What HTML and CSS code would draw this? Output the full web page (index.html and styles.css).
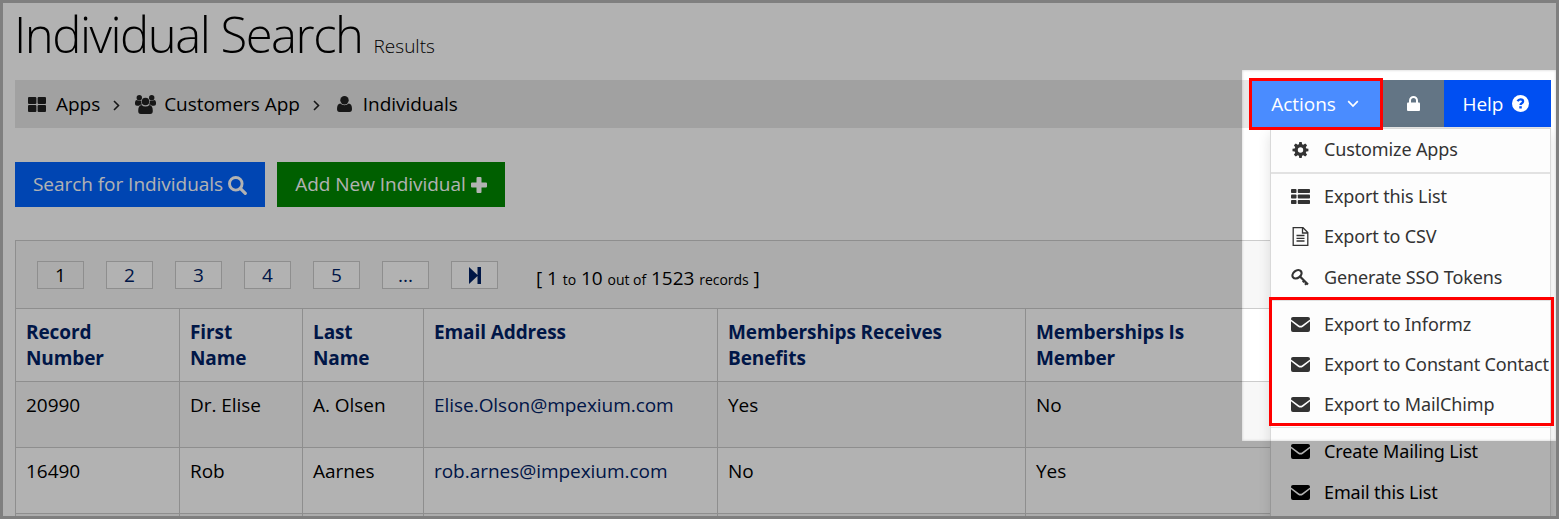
FILE: index.html
```html
<!DOCTYPE html>
<html lang="en">
<head>
    <meta charset="UTF-8">
    <meta name="viewport" content="width=device-width, initial-scale=1.0">
    <title>Individual Search</title>
    <link rel="stylesheet" href="styles.css">
</head>
<body>
    <svg class="sprite" aria-hidden="true">
        <symbol id="mail" viewBox="0 0 19 15">
            <path d="M2 0h15a2 2 0 0 1 2 2v.6L11.200 8.200q-1.700 1.200-3.400 0L0 2.600V2a2 2 0 0 1 2-2z"/>
            <path d="M0 4.300l7 5.400q2.500 1.800 5 0l7-5.400V13a2 2 0 0 1-2 2H2a2 2 0 0 1-2-2z"/>
        </symbol>
    </svg>
    <div class="page">
        <h1>Individual Search <small>Results</small></h1>

        <div class="toolbar">
            <nav class="breadcrumb">
                <svg class="icon-apps" width="18" height="15" viewBox="0 0 18 15"><rect width="8.400" height="6.900" rx="1"/><rect x="9.600" width="8.400" height="6.900" rx="1"/><rect y="8.100" width="8.400" height="6.900" rx="1"/><rect x="9.600" y="8.100" width="8.400" height="6.900" rx="1"/></svg>
                <a href="#">Apps</a>
                <svg class="sep" width="7" height="11" viewBox="0 0 7 11"><path d="M1 1l4.500 4.500L1 10"/></svg>
                <svg class="icon-group" width="21" height="19" viewBox="0 0 21 19"><circle cx="4.300" cy="2.700" r="2.700"/><circle cx="16.700" cy="2.700" r="2.700"/><path d="M0 9V7.500Q0 5 1.800 5q1 .8 2.500.8.900 0 1.800-.4-.2 2.600 1 4.200-1.900 0-3.100 1.200H2Q0 10.800 0 9zM21 9V7.500Q21 5 19.200 5q-1 .8-2.500.8-.9 0-1.800-.4.2 2.600-1 4.200 1.900 0 3.100 1.200h2Q21 10.800 21 9z"/><circle cx="10.500" cy="6.500" r="3.800"/><path d="M6.500 10q1.700 1.500 4 1.500t4-1.500q3.300.4 3.300 6 0 3-2.600 3H5.800q-2.600 0-2.600-3 0-5.600 3.300-6z"/></svg>
                <a href="#">Customers App</a>
                <svg class="sep" width="7" height="11" viewBox="0 0 7 11"><path d="M1 1l4.500 4.500L1 10"/></svg>
                <svg class="icon-user" width="15" height="16" viewBox="0 0 15 16"><circle cx="7.500" cy="4.200" r="4.200"/><path d="M3.300 7.500Q5 9.200 7.500 9.200t4.200-1.700Q15 7.800 15 13q0 3-2.500 3h-10Q0 16 0 13q0-5.200 3.300-5.500z"/></svg>
                <a href="#">Individuals</a>
            </nav>
            <div class="tools">
                <button class="tool tool-actions">Actions
                    <svg width="12" height="8" viewBox="0 0 12 8"><path d="M1.200 1.200L6 6l4.800-4.800" fill="none" stroke="#fff" stroke-width="1.700"/></svg>
                </button>
                <button class="tool tool-lock" aria-label="Lock">
                    <svg width="13" height="15" viewBox="0 0 13 15"><path d="M3 7V4.500a3.500 3.500 0 0 1 7 0V7" fill="none" stroke="#fff" stroke-width="2"/><rect y="6.500" width="13" height="8.500" rx="1"/></svg>
                </button>
                <button class="tool tool-help">Help
                    <svg width="17" height="17" viewBox="0 0 17 17"><circle cx="8.500" cy="8.500" r="8.500"/><path d="M5.600 6.300q.8-2 2.900-2 2.600 0 2.600 2 0 1.200-1.300 1.900-1.300.7-1.300 1.900" fill="none" stroke="#004ff2" stroke-width="2.300"/><rect x="7.300" y="11.200" width="2.500" height="2.300" fill="#004ff2"/></svg>
                </button>
            </div>

            <ul class="menu">
                <li><svg width="16" height="16" viewBox="0 0 16 16"><path fill-rule="evenodd" d="M6.800 0h2.400l.4 2.200 1.200.5 1.900-1.300 1.900 1.900-1.300 1.900.5 1.200 2.100.4v2.400l-2.100.4-.5 1.200 1.300 1.900-1.900 1.900-1.900-1.300-1.200.5L9.200 16H6.800l-.4-2.200-1.200-.5-1.900 1.300-1.900-1.900 1.300-1.900-.5-1.200L0 9.200V6.800l2.200-.4.500-1.200-1.300-1.900 1.900-1.900 1.900 1.300 1.200-.5zM8 5.300a2.700 2.700 0 1 0 0 5.400 2.700 2.700 0 0 0 0-5.400z"/></svg>Customize Apps</li>
                <li class="divider thick"></li>
                <li><svg width="19" height="15" viewBox="0 0 19 15"><rect width="5.500" height="4" rx=".8"/><rect x="6.800" width="12.200" height="4" rx=".8"/><rect y="5.500" width="5.500" height="4" rx=".8"/><rect x="6.800" y="5.500" width="12.200" height="4" rx=".8"/><rect y="11" width="5.500" height="4" rx=".8"/><rect x="6.800" y="11" width="12.200" height="4" rx=".8"/></svg>Export this List</li>
                <li><svg class="icon-file" width="16" height="19" viewBox="0 0 16 19"><path d="M.7.700h9.800l4.800 4.800v12.800H.7zM10 .7v5.300h5.300M4 8.500h8M4 11.300h8M4 14h8"/></svg>Export to CSV</li>
                <li><svg class="icon-key" width="19" height="17" viewBox="0 0 19 17"><path d="M8.500 7l8.500 8.500M14 15.800l2.300-2.500M11.800 13.200l2-2.200"/><ellipse cx="6" cy="5.300" rx="5" ry="3.600" transform="rotate(-38 6 5.300)"/></svg>Generate SSO Tokens</li>
                <li class="divider"></li>
                <li><svg width="19" height="15"><use href="#mail"/></svg>Export to Informz</li>
                <li><svg width="19" height="15"><use href="#mail"/></svg>Export to Constant Contact</li>
                <li><svg width="19" height="15"><use href="#mail"/></svg>Export to MailChimp</li>
                <li class="divider"></li>
                <li class="dark"><svg width="19" height="15"><use href="#mail"/></svg>Create Mailing List</li>
                <li class="dark"><svg width="19" height="15"><use href="#mail"/></svg>Email this List</li>
            </ul>
        </div>

        <div class="buttons">
            <button class="btn btn-search"><span>Search for Individuals</span>
                <svg width="19" height="19" viewBox="0 0 19 19"><circle cx="7.800" cy="7.800" r="6.300" fill="none" stroke="#fff" stroke-width="2.900"/><path d="M12.300 12.300l5 5" stroke="#fff" stroke-width="3.200" stroke-linecap="round"/></svg>
            </button>
            <button class="btn btn-add"><span>Add New Individual</span>
                <svg width="16" height="16" viewBox="0 0 16 16"><path d="M5.500 1q0-1 1-1h3q1 0 1 1v4.500H15q1 0 1 1v3q0 1-1 1h-4.500V15q0 1-1 1h-3q-1 0-1-1v-4.500H1q-1 0-1-1v-3q0-1 1-1h4.500z"/></svg>
            </button>
        </div>

        <div class="results">
            <div class="pager">
                <a class="current">1</a>
                <a>2</a>
                <a>3</a>
                <a>4</a>
                <a>5</a>
                <a>...</a>
                <a><svg width="12" height="17" viewBox="0 0 12 17"><path d="M0 0l8.500 8V0H12v17H8.500V9L0 17z"/></svg></a>
                <div class="count">[ 1 <small>to</small> 10 <small>out of</small> 1523 <small>records</small> ]</div>
            </div>
            <table>
                <colgroup>
                    <col class="c-record"><col class="c-first"><col class="c-last"><col class="c-email"><col class="c-benefits"><col>
                </colgroup>
                <thead>
                    <tr>
                        <th>Record<br>Number</th>
                        <th>First<br>Name</th>
                        <th>Last<br>Name</th>
                        <th>Email Address</th>
                        <th>Memberships Receives<br>Benefits</th>
                        <th>Memberships Is<br>Member</th>
                    </tr>
                </thead>
                <tbody>
                    <tr>
                        <td>20990</td>
                        <td>Dr. Elise</td>
                        <td>A. Olsen</td>
                        <td><a href="#">Elise.Olson@mpexium.com</a></td>
                        <td>Yes</td>
                        <td>No</td>
                    </tr>
                    <tr>
                        <td>16490</td>
                        <td>Rob</td>
                        <td>Aarnes</td>
                        <td><a href="#">rob.arnes@impexium.com</a></td>
                        <td>No</td>
                        <td>Yes</td>
                    </tr>
                    <tr><td></td><td></td><td></td><td></td><td></td><td></td></tr>
                </tbody>
            </table>
        </div>

        <!-- dims everything outside of the actions menu -->
        <div class="spotlight"></div>
        <div class="mark mark-actions"></div>
        <div class="mark mark-exports"></div>
    </div>
</body>
</html>
```
FILE: styles.css
```css
* {
    box-sizing: border-box;
}
body {
    margin: 0;
    font-family: "Open Sans", "Segoe UI", sans-serif;
    font-size: 19px;
    letter-spacing: -0.04px;
    color: #000;
}
a {
    color: #002266;
    text-decoration: none;
}
button {
    border: none;
    padding: 0;
    font: inherit;
    letter-spacing: inherit;
    color: #fff;
}
svg {
    flex: none;
}
.sprite {
    display: none;
}
.page {
    position: relative;
    height: 519px;
    padding: 0 5px 0 12px;
    border: 3px solid #7f7f7f;
    background: #fff;
    overflow: hidden;
}
h1 {
    margin: 0 0 0 -1px;
    height: 77px;
    font-size: 49px;
    font-weight: 300;
    line-height: 62px;
    letter-spacing: -1.5px;
    white-space: nowrap;
}
h1 small {
    font-size: 19px;
    letter-spacing: 0;
}

/* toolbar */
.toolbar {
    position: relative;
    display: flex;
    justify-content: space-between;
    height: 48px;
    background: #e7e7e7;
}
.breadcrumb {
    display: flex;
    align-items: center;
    padding-left: 13px;
}
.breadcrumb a {
    color: #000;
}
.breadcrumb svg {
    fill: #222;
}
.breadcrumb .sep {
    fill: none;
    stroke: #222;
    stroke-width: 1.6;
    margin: 2px 15px 0 13px;
}
.icon-apps {
    margin-right: 10px;
}
.icon-group {
    margin-right: 8px;
}
.icon-user {
    margin: 0 11px 0 2px;
}
.tools {
    display: flex;
    height: 47px;
}
.tool {
    display: flex;
    align-items: center;
    justify-content: center;
    fill: #fff;
}
.tool-actions {
    width: 132px;
    gap: 11px;
    padding-right: 4px;
    background: #4a8cff;
}
.tool-lock {
    width: 61px;
    background: #637585;
}
.tool-help {
    width: 107px;
    gap: 9px;
    padding-right: 3px;
    background: #004ff2;
}
.menu {
    position: absolute;
    z-index: 2;
    top: 48px;
    right: 0;
    width: 281px;
    height: 420px;
    margin: 0;
    padding: 0;
    list-style: none;
    border: 1px solid #d9d9d9;
    background: #fdfdfd;
    box-shadow: 0 6px 12px rgba(0, 0, 0, 0.12);
    font-family: "Noto Sans", sans-serif;
    font-size: 18px;
    letter-spacing: -0.13px;
    color: #333;
    fill: #333;
}
.menu li {
    display: flex;
    align-items: center;
    height: 40.200px;
    white-space: nowrap;
}
.menu svg {
    width: 19px;
    margin: 1px 14px 0 20px;
}
.menu .icon-file {
    fill: none;
    stroke: #333;
    stroke-width: 1.3;
}
.menu .icon-key {
    fill: none;
    stroke: #333;
    stroke-width: 2.2;
}
.menu .divider {
    height: 1px;
    margin: 3px 0;
    background: #e2e2e2;
}
.menu .thick {
    height: 2px;
    margin: 3px 0 2px;
}
.menu .dark {
    color: #000;
    fill: #000;
}

/* buttons */
.buttons {
    display: flex;
    gap: 12px;
    padding: 34px 0 33px;
}
.btn {
    display: flex;
    align-items: center;
    justify-content: center;
    gap: 5px;
    height: 45px;
    padding-bottom: 1px;
    fill: #fff;
}
.btn svg {
    margin-top: 2px;
}
.btn-search {
    width: 250px;
    background: #0063ff;
}
.btn-add {
    width: 228px;
    background: #008800;
}

/* results */
.pager {
    display: flex;
    align-items: flex-start;
    gap: 22px;
    height: 68px;
    padding: 20px 21px 0;
    border: 1px solid #ccc;
    border-bottom: none;
    background: #f7f7f7;
}
.pager a {
    display: flex;
    align-items: center;
    justify-content: center;
    width: 47px;
    height: 28px;
    border: 1px solid #ccc;
    background: #fff;
    fill: #002266;
}
.pager .current {
    color: #000;
    background: #f7f7f7;
}
.count {
    margin: 4px 0 0 16px;
}
.count small {
    font-size: 14px;
}
table {
    width: 100%;
    table-layout: fixed;
    border-collapse: collapse;
}
.c-record { width: 164px; }
.c-first { width: 123px; }
.c-last { width: 121px; }
.c-email { width: 294px; }
.c-benefits { width: 308px; }
th, td {
    height: 66px;
    padding: 10px 10px 0;
    border: 1px solid #ccc;
    text-align: left;
    vertical-align: top;
    line-height: 26px;
    white-space: nowrap;
}
th {
    height: 73px;
    color: #002266;
    letter-spacing: -0.1px;
}
tbody tr:nth-child(odd) {
    background: #f7f7f7;
}

.spotlight {
    position: absolute;
    z-index: 3;
    top: 67px;
    left: 1239px;
    width: 314px;
    height: 371px;
    box-shadow: 0 0 2px 2000px rgba(0, 0, 0, 0.3), inset 0 0 3px rgba(0, 0, 0, 0.2);
}
.mark {
    position: absolute;
    z-index: 4;
    border: 3px solid #f00;
}
.mark-actions {
    top: 75px;
    left: 1246px;
    width: 134px;
    height: 52px;
}
.mark-exports {
    top: 294px;
    left: 1266px;
    width: 285px;
    height: 129px;
}
```
